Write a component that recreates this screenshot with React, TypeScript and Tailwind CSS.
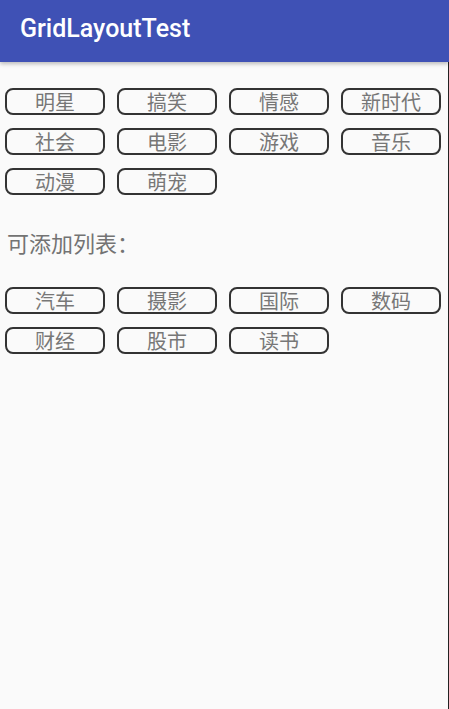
const hotTags = ["明星", "搞笑", "情感", "新时代", "社会", "电影", "游戏", "音乐", "动漫", "萌宠"];
const moreTags = ["汽车", "摄影", "国际", "数码", "财经", "股市", "读书"];

const font = { fontFamily: '"Noto Sans CJK SC", Roboto, sans-serif' };

function TagGrid({ tags }: { tags: string[] }) {
  return (
    <div className="grid grid-cols-[repeat(4,100px)] gap-x-[12px] gap-y-[13px]">
      {tags.map((t) => (
        <button
          key={t}
          className="h-[27px] rounded-[8px] border-2 border-[#333] bg-transparent text-[20px] leading-none text-[#777]"
        >
          {t}
        </button>
      ))}
    </div>
  );
}

export default function App() {
  return (
    <div className="flex h-[709px] w-[449px] flex-col bg-[#fafafa]" style={font}>
      <header className="relative z-10 flex h-[62px] shrink-0 items-center bg-[#3f51b5] pb-[4px] pl-[20px] shadow-[0_2px_4px_rgba(0,0,0,0.25)]">
        <h1 className="font-['Roboto'] text-[25px] font-medium text-white">GridLayoutTest</h1>
      </header>
      <main className="flex-1 border-r-[1.5px] border-[#222] pl-[5px] pt-[26px]">
        <TagGrid tags={hotTags} />
        <p className="mt-[32px] pl-[2px] text-[22px] leading-[30px] text-[#737373]">可添加列表：</p>
        <div className="mt-[30px]">
          <TagGrid tags={moreTags} />
        </div>
      </main>
    </div>
  );
}
